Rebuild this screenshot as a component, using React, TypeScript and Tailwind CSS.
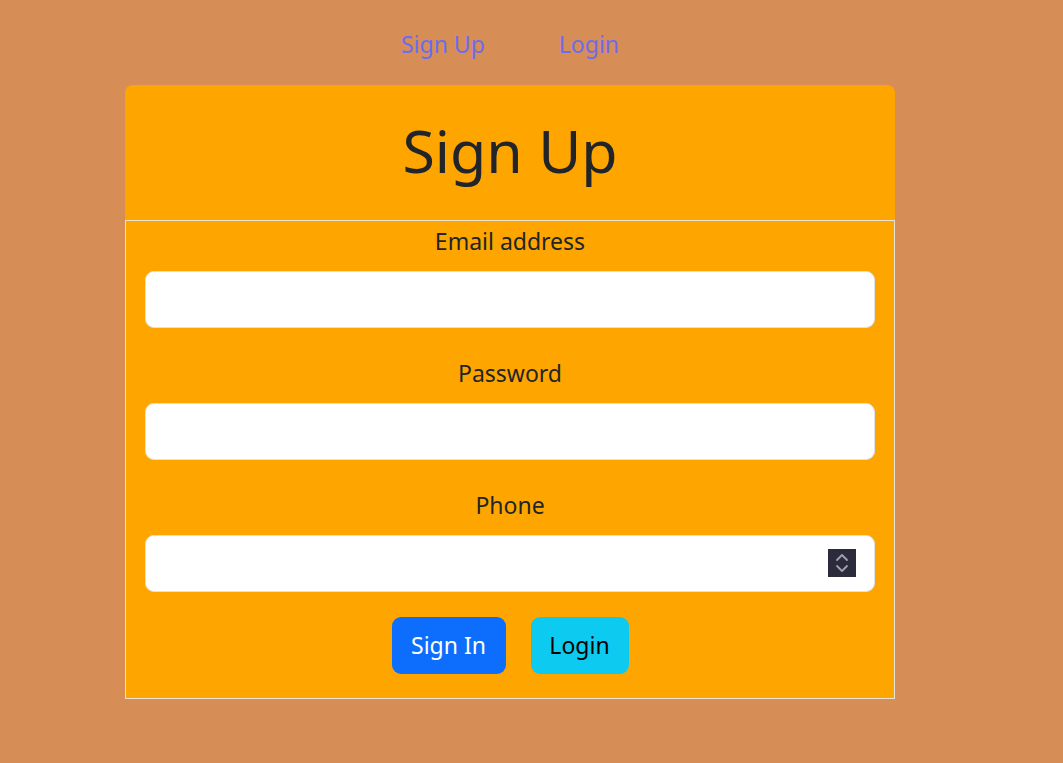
import React from 'react';

const font = { fontFamily: '"Noto Sans", "Open Sans", sans-serif' };

const Field: React.FC<{ label: string; spinner?: boolean; last?: boolean }> = ({ label, spinner, last }) => (
  <div className={last ? 'mb-[25px]' : 'mb-[27px]'}>
    <label className="block text-center text-[23px] leading-[36px] text-[#212529] mb-[12px]">{label}</label>
    <div className="relative">
      <input className="block w-full h-[57px] rounded-[9px] border border-[#dee2e6] bg-white px-[18px] text-[22px] outline-none" />
      {spinner && (
        <div className="absolute right-[19px] top-[14px] w-[28px] h-[28px] bg-[#2b2b3b] flex items-center justify-center">
          <svg width="16" height="24" viewBox="0 0 16 24" fill="none" stroke="#a0a0ae" strokeWidth="1.8" strokeLinecap="round" strokeLinejoin="round">
            <path d="M3 9 L8 4 L13 9" />
            <path d="M3 15 L8 20 L13 15" />
          </svg>
        </div>
      )}
    </div>
  </div>
);

export default function App() {
  return (
    <div className="min-h-[763px] w-full bg-[#d68d56]" style={font}>
      <div className="w-[770px] ml-[125px]">
        <nav className="flex justify-center gap-[74px] pt-[26px] pb-[23px] text-[23px] leading-[36px] text-[#6c6cf0]">
          <a>Sign Up</a>
          <a>Login</a>
        </nav>
        <div className="bg-[#ffa500] rounded-t-[8px] h-[135px] flex items-center justify-center pb-[5px]">
          <h1 className="text-[59px] leading-[72px] text-[#212529]">Sign Up</h1>
        </div>
        <div className="bg-[#ffa500] border border-[#e9e2d6] px-[19px] pt-[2px]">
          <Field label="Email address" />
          <Field label="Password" />
          <Field label="Phone" spinner last />
          <div className="flex justify-center gap-[25px] pb-[24px]">
            <button className="h-[57px] w-[114px] rounded-[9px] bg-[#0d6efd] text-white text-[23px]">Sign In</button>
            <button className="h-[57px] w-[98px] rounded-[9px] bg-[#0dcaf0] text-black text-[23px]">Login</button>
          </div>
        </div>
      </div>
    </div>
  );
}
